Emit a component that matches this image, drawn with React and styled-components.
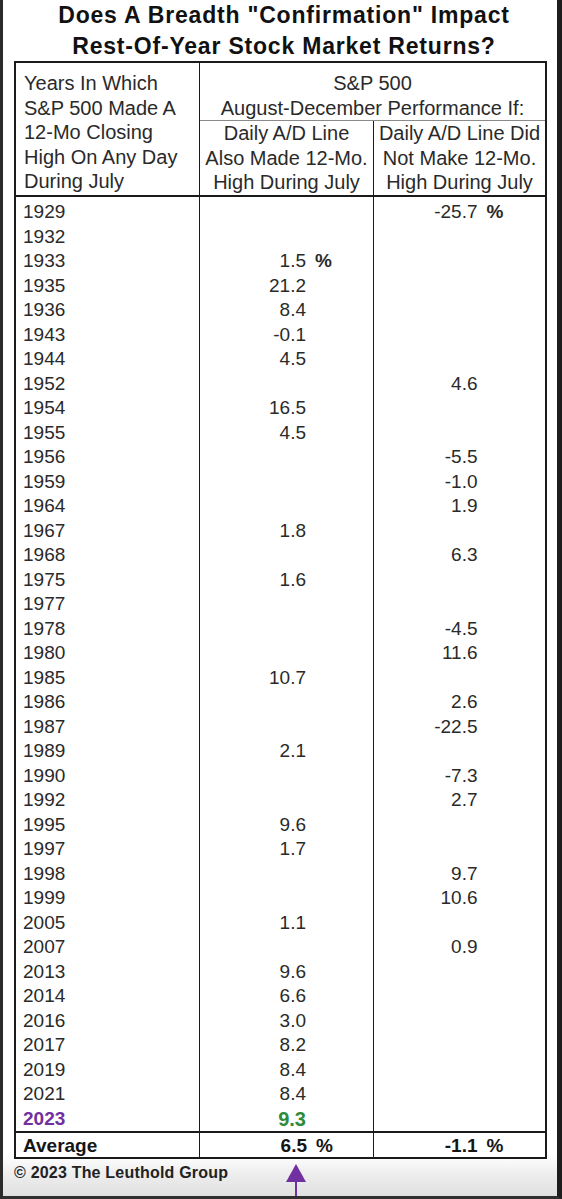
import React from 'react';
import styled, { createGlobalStyle } from 'styled-components';

const GlobalStyle = createGlobalStyle`
	body {
		margin: 0;
		background: #fff;
	}
	* {
		box-sizing: border-box;
	}
`;

const INK = '#1a1a1a';
const PURPLE = '#7030a0';
const GREEN = '#2e8b3a';

// year, column 2 (A/D line confirmed), column 3 (not confirmed)
const rows = [
	['1929', null, '-25.7', { pct3: true }],
	['1932', null, null],
	['1933', '1.5', null, { pct2: true }],
	['1935', '21.2', null],
	['1936', '8.4', null],
	['1943', '-0.1', null],
	['1944', '4.5', null],
	['1952', null, '4.6'],
	['1954', '16.5', null],
	['1955', '4.5', null],
	['1956', null, '-5.5'],
	['1959', null, '-1.0'],
	['1964', null, '1.9'],
	['1967', '1.8', null],
	['1968', null, '6.3'],
	['1975', '1.6', null],
	['1977', null, null],
	['1978', null, '-4.5'],
	['1980', null, '11.6'],
	['1985', '10.7', null],
	['1986', null, '2.6'],
	['1987', null, '-22.5'],
	['1989', '2.1', null],
	['1990', null, '-7.3'],
	['1992', null, '2.7'],
	['1995', '9.6', null],
	['1997', '1.7', null],
	['1998', null, '9.7'],
	['1999', null, '10.6'],
	['2005', '1.1', null],
	['2007', null, '0.9'],
	['2013', '9.6', null],
	['2014', '6.6', null],
	['2016', '3.0', null],
	['2017', '8.2', null],
	['2019', '8.4', null],
	['2021', '8.4', null],
	['2023', '9.3', null, { highlight: true }]
];

const Screen = styled.div`
	width: 562px;
	height: 1199px;
	border-left: 3px solid #2b2b2b;
	border-right: 5px solid #1d1d1d;
	border-bottom: 3px solid #2f2f2f;
	background: linear-gradient(to bottom, #fff 0, #fff 1155px, #efefef 1172px, #e0e0e0 100%);
	display: flex;
	flex-direction: column;
	font-family: "Liberation Sans", Arial, sans-serif;
	color: #2a2a2a;
	overflow: hidden;
`;

const Title = styled.h1`
	margin: 0;
	padding-left: 8px;
	height: 61px;
	font-size: 23px;
	line-height: 30.5px;
	letter-spacing: 0.8px;
	font-weight: bold;
	text-align: center;
	color: #111;
`;

const Table = styled.div`
	width: 533px;
	margin-left: 11px;
	border: 2px solid ${INK};
	background: #fff;
`;

const Header = styled.div`
	display: grid;
	grid-template-columns: 183px 1fr;
	border-bottom: 2px solid ${INK};
	font-size: 20px;
	line-height: 24.5px;
`;

const HeaderLeft = styled.div`
	padding: 8px 0 0 8px;
`;

const HeaderRight = styled.div`
	border-left: 1px solid ${INK};
	display: flex;
	flex-direction: column;
`;

const SpanTitle = styled.div`
	padding-top: 8px;
	text-align: center;
	border-bottom: 1px solid #8a8a8a;
`;

const SubHeads = styled.div`
	display: grid;
	grid-template-columns: 173px 1fr;
`;

const SubHead = styled.div`
	text-align: center;
	white-space: nowrap;
	border-left: ${p => (p.$divider ? `1px solid ${INK}` : 'none')};
`;

const Body = styled.div`
	font-size: 19px;
`;

const Row = styled.div`
	display: grid;
	grid-template-columns: 183px 174px 1fr;
	height: ${p => (p.$first ? '28px' : '24.5px')};
	line-height: 24.5px;
`;

const YearCell = styled.div`
	padding: ${p => (p.$first ? '3.5px' : '0')} 0 0 7px;
	color: ${p => (p.$highlight ? PURPLE : 'inherit')};
	font-weight: ${p => (p.$highlight ? 'bold' : 'inherit')};
`;

const ValueCell = styled.div`
	display: flex;
	border-left: 1px solid ${INK};
	padding-top: ${p => (p.$first ? '3.5px' : '0')};
	color: ${p => (p.$highlight ? GREEN : 'inherit')};
	font-weight: ${p => (p.$highlight ? 'bold' : 'inherit')};
	font-size: ${p => (p.$highlight ? '20px' : 'inherit')};
`;

const Num = styled.span`
	width: ${p => p.$w}px;
	text-align: right;
	white-space: nowrap;
`;

const Pct = styled.span`
	margin-left: 9px;
	font-weight: bold;
`;

const AverageRow = styled(Row)`
	height: 26px;
	line-height: 26px;
	border-top: 2px solid ${INK};
	font-weight: bold;
	font-size: 19px;
	color: #151515;
`;

const Footer = styled.div`
	position: relative;
	flex: 1;
	margin-left: 11px;
`;

const Copyright = styled.div`
	padding-top: 4px;
	font-size: 16px;
	line-height: 20px;
	letter-spacing: 0.2px;
	font-weight: bold;
	color: #222;
`;

const Arrow = styled.svg`
	position: absolute;
	left: 272px;
	top: 5px;
`;

function Value({ value, width, pct, first, highlight }) {
	return (
		<ValueCell $first={first} $highlight={highlight}>
			{value && <Num $w={width}>{value}</Num>}
			{value && pct && <Pct>%</Pct>}
		</ValueCell>
	);
}

export default function App() {
	return (
		<>
			<GlobalStyle />
			<Screen>
				<Title>
					Does A Breadth "Confirmation" Impact
					<br />
					Rest-Of-Year Stock Market Returns?
				</Title>
				<Table>
					<Header>
						<HeaderLeft>
							Years In Which<br />
							S&amp;P 500 Made A<br />
							12-Mo Closing<br />
							High On Any Day<br />
							During July
						</HeaderLeft>
						<HeaderRight>
							<SpanTitle>
								S&amp;P 500<br />
								August-December Performance If:
							</SpanTitle>
							<SubHeads>
								<SubHead>
									Daily A/D Line<br />
									Also Made 12-Mo.<br />
									High During July
								</SubHead>
								<SubHead $divider>
									Daily A/D Line Did<br />
									Not Make 12-Mo.<br />
									High During July
								</SubHead>
							</SubHeads>
						</HeaderRight>
					</Header>
					<Body>
						{rows.map(([year, a, b, opts = {}], i) => (
							<Row key={year} $first={i === 0}>
								<YearCell $first={i === 0} $highlight={opts.highlight}>{year}</YearCell>
								<Value value={a} width={106} pct={opts.pct2} first={i === 0} highlight={opts.highlight} />
								<Value value={b} width={103.5} pct={opts.pct3} first={i === 0} />
							</Row>
						))}
					</Body>
					<AverageRow>
						<YearCell>Average</YearCell>
						<Value value="6.5" width={107} pct />
						<Value value="-1.1" width={103.5} pct />
					</AverageRow>
				</Table>
				<Footer>
					<Copyright>© 2023 The Leuthold Group</Copyright>
					<Arrow width="20" height="32" viewBox="0 0 20 32">
						<polygon points="10,0 20,18 0,18" fill={PURPLE} />
						<rect x="9" y="17" width="2" height="15" fill={PURPLE} />
					</Arrow>
				</Footer>
			</Screen>
		</>
	);
}
